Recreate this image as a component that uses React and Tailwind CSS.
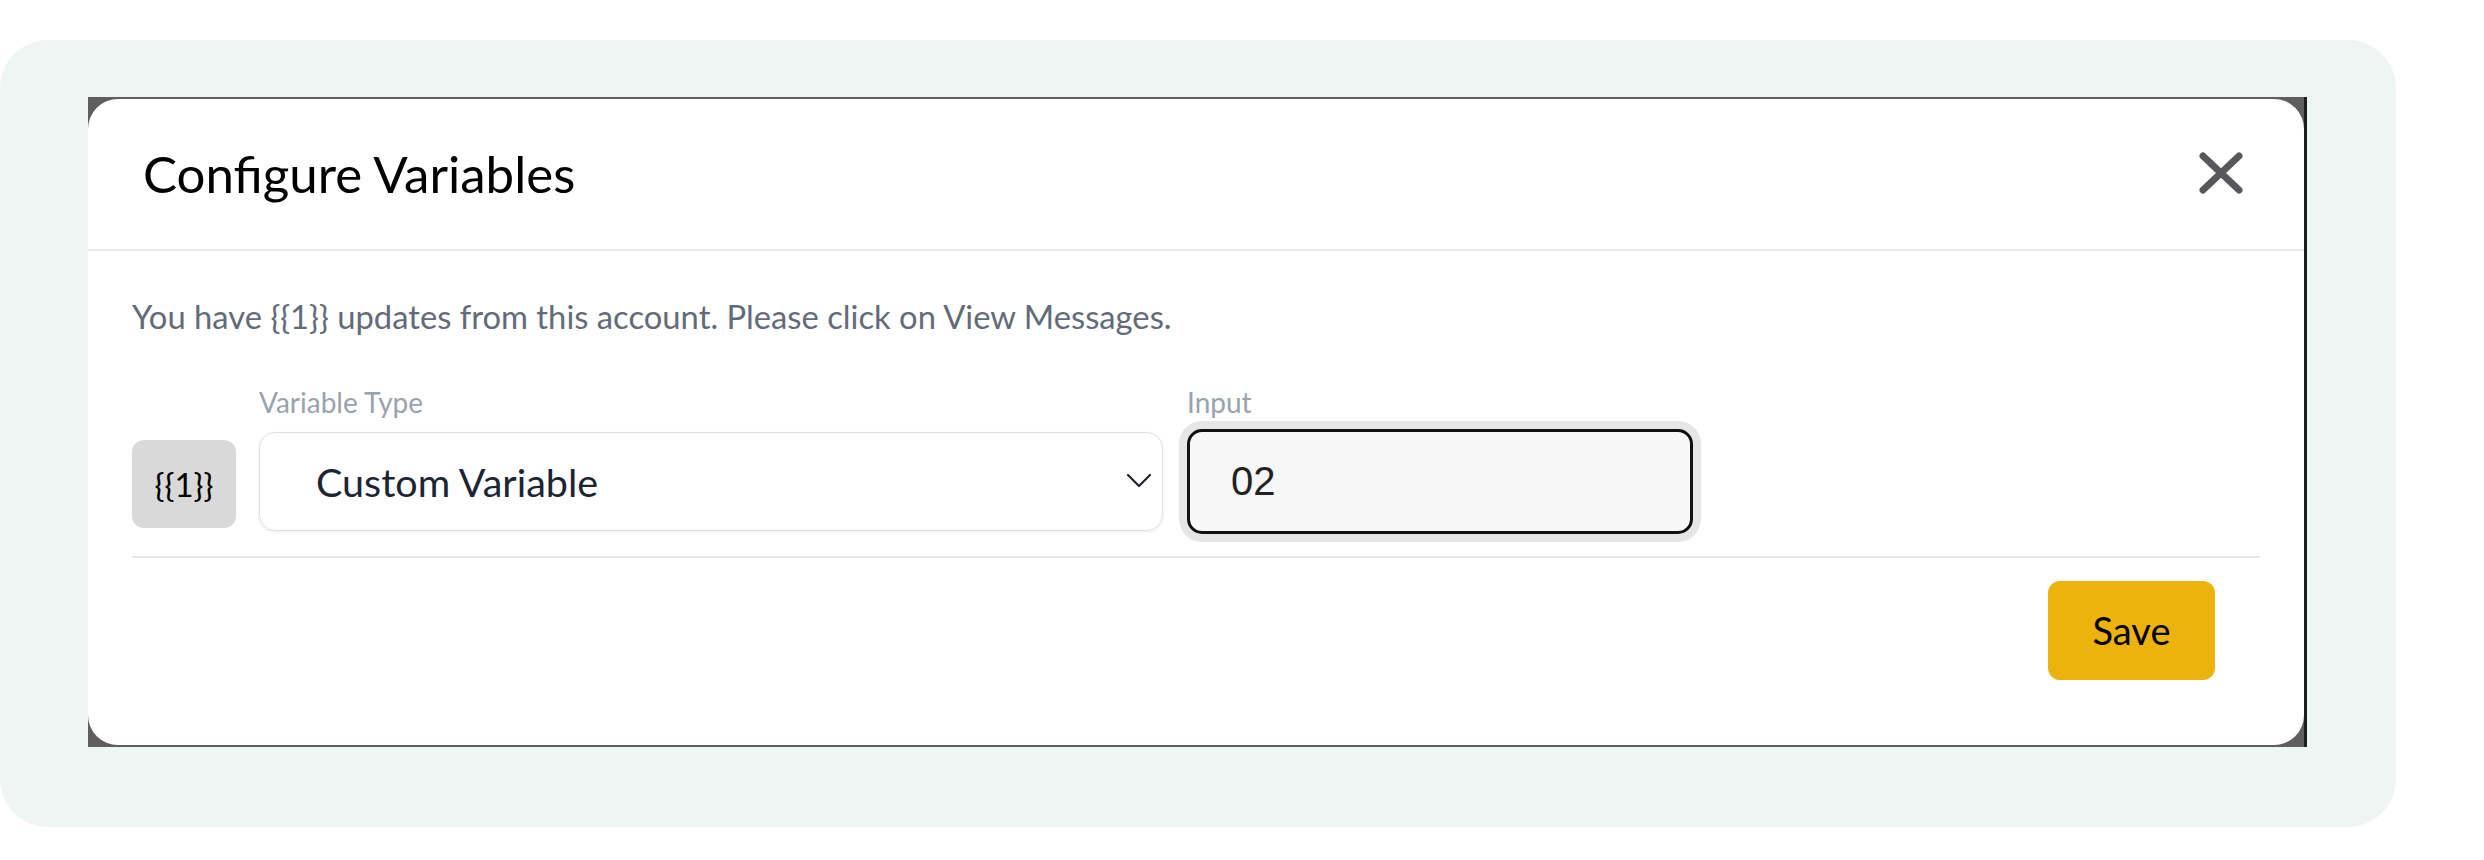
import React from "react";

const lato = { fontFamily: "Lato, 'Noto Sans', sans-serif" };

function CloseIcon() {
  return (
    <svg width="44" height="42" viewBox="0 0 44 42" fill="none">
      <path d="M4 4 L40 38 M40 4 L4 38" stroke="#58585c" strokeWidth="7" strokeLinecap="round" />
    </svg>
  );
}

function Chevron() {
  return (
    <svg width="26" height="16" viewBox="0 0 26 16" fill="none">
      <path d="M2 2 L13 13 L24 2" stroke="#1b2533" strokeWidth="2.2" strokeLinecap="round" strokeLinejoin="round" />
    </svg>
  );
}

export default function App() {
  return (
    <div className="min-h-screen bg-white pt-[40px]" style={lato}>
      <div className="w-[2396px] h-[787px] rounded-[48px] bg-[#edf6f2] pl-[88px] pt-[57px]">
        {/* modal sits on a dark backdrop strip */}
        <div className="w-[2219px] h-[650px] bg-[#5e5e5e] py-[2px] border-r-[3px] border-[#1e1e1e]">
          <div className="h-full rounded-[30px] bg-white flex flex-col">
            <div className="h-[152px] shrink-0 flex items-center justify-between pl-[55px] pr-[61px] border-b-2 border-[#e6e6ec]">
              <h2 className="text-[51px] leading-[1.2] text-black font-normal">Configure Variables</h2>
              <button className="mb-[3px]">
                <CloseIcon />
              </button>
            </div>

            <div className="px-[44px] pt-[46px]">
              <p className="text-[32.75px] leading-[1.2] text-[#626b7a]">
                You have {"{{1}}"} updates from this account. Please click on View Messages.
              </p>

              <div className="mt-[50px] flex text-[28px] leading-[1.2] text-[#9aa2ae] mb-[9px]">
                <div className="w-[127px] shrink-0" />
                <div className="w-[904px] shrink-0">Variable Type</div>
                <div className="ml-[24px]">Input</div>
              </div>

              <div className="flex items-center">
                <div className="w-[104px] h-[88px] shrink-0 mt-[6px] rounded-[12px] bg-[#d9d9d9] flex items-center justify-center text-[33px] text-black">
                  {"{{1}}"}
                </div>
                <div className="ml-[23px] w-[904px] h-[99px] shrink-0 rounded-[16px] border-[1.5px] border-[#e0e0e0] shadow-[0_1px_3px_rgba(0,0,0,0.08)] flex items-center justify-between pl-[56px] pr-[10px]">
                  <span className="text-[39.5px] text-[#1b2533]">Custom Variable</span>
                  <Chevron />
                </div>
                <div className="ml-[24px] w-[506px] h-[105px] shrink-0 rounded-[15px] border-[3px] border-[#111111] bg-[#f7f7f7] shadow-[0_0_0_8px_#e6e6e6] flex items-center pl-[41px]">
                  <span className="text-[40px] text-[#222222]" style={{ fontFamily: "'Liberation Sans', Arial, sans-serif" }}>
                    02
                  </span>
                </div>
              </div>

              <div className="mt-[22px] h-[2px] bg-[#e6e6ec]" />

              <div className="flex justify-end mt-[23px] pr-[45px]">
                <button className="w-[167px] h-[99px] rounded-[12px] bg-[#ecb30f] text-[38px] text-black">
                  Save
                </button>
              </div>
            </div>
          </div>
        </div>
      </div>
    </div>
  );
}
